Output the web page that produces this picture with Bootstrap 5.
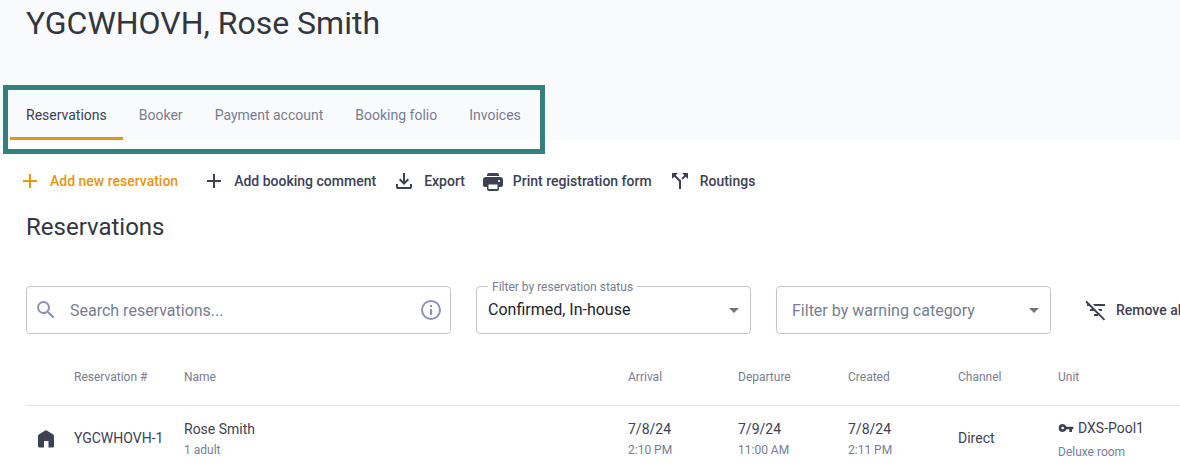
<!DOCTYPE html>
<html lang="en">
<head>
<meta charset="utf-8">
<meta name="viewport" content="width=device-width, initial-scale=1">
<title>YGCWHOVH, Rose Smith</title>
<link rel="stylesheet" href="https://cdn.jsdelivr.net/npm/bootstrap@5.3.0/dist/css/bootstrap.min.css">
<style>
  :root { --ink: #3e4154; --soft: #787d91; --accent: #e39612; --field: #c1c4d6; }
  body { font-family: Roboto, "Liberation Sans", sans-serif; font-size: 14px; line-height: 20px; color: var(--ink); background: #fff; overflow-x: hidden; }
  svg { fill: currentColor; flex: none; }
  .page-head { display: flow-root; background: #f9fafc; }
  .page-head h1 { font-size: 32px; line-height: 40px; font-weight: 400; color: #33363f; padding: 3px 26px 42px; }
  .tab-frame { width: fit-content; border: 5px solid #377e7f; margin: 0 3px -14px; padding: 0 3px 9px 2px; position: relative; }
  .tab-frame .nav-link { color: var(--soft); padding: 15px 16px 12px; border-bottom: 3px solid transparent; }
  .tab-frame .nav-link.active { color: var(--ink); border-color: var(--accent); }
  .page-body { padding: 29px 0 0 26px; }
  .actions { margin-left: -8px; gap: 16px; }
  .act { font-size: 14px; line-height: 24px; font-weight: 500; color: var(--ink); border: 0; padding: 0; display: flex; gap: 8px; white-space: nowrap; }
  .act-main { color: var(--accent); margin-right: 8px; }
  .page-body h2 { font-size: 24px; line-height: 32px; font-weight: 400; color: #33363f; margin: 18px 0 43px; }
  .filters { gap: 25px; }
  .field { height: 48px; border: 1px solid var(--field); border-radius: 4px; font-size: 16px; line-height: 24px; }
  .field input, .field select { border: 0; outline: 0; background: none; appearance: none; color: #22242c; width: 100%; height: 100%; padding: 0; min-width: 0; }
  .field input::placeholder { color: var(--soft); opacity: 1; }
  .search { flex: 1 1 0; min-width: 200px; color: #8e94b0; padding: 0 7px; gap: 12px; }
  .pick { flex: 0 1 275px; min-width: 0; }
  .pick select { padding: 0 32px 0 11px; }
  .pick select.empty { color: var(--soft); padding: 2px 32px 0 15px; }
  .pick label { position: absolute; left: 11px; top: -8px; font-size: 12px; line-height: 16px; background: #fff; color: var(--soft); padding: 0 4px; }
  .pick svg { position: absolute; right: 4px; top: 11px; color: #757575; pointer-events: none; }
  .remove { width: 96px; margin-left: 8px; gap: 8px; }
  .grid-table { table-layout: fixed; width: 100%; margin-top: 16px; }
  .grid-table th { font-size: 12px; line-height: 16px; font-weight: 400; color: var(--soft); height: 55px; padding: 0; border-bottom: 1px solid #e0e0e0; }
  .grid-table td { height: 65px; padding: 0; white-space: nowrap; }
  .sub { font-size: 12px; line-height: 16px; color: var(--soft); display: block; }
  .two, .unit { padding-top: 2px; }
  .two .sub { margin-top: 3px; }
  .unit .sub { margin-top: 6px; }
  .w-icon { width: 48px; } .w-date { width: 110px; } .w-chan { width: 100px; } .w-unit { width: 122px; }
</style>
</head>
<body>
<header class="page-head">
  <h1 class="m-0">YGCWHOVH, Rose Smith</h1>
  <nav class="tab-frame" aria-label="Booking">
    <div class="nav flex-nowrap">
      <a class="nav-link active" href="#" aria-current="page">Reservations</a>
      <a class="nav-link" href="#">Booker</a>
      <a class="nav-link" href="#">Payment account</a>
      <a class="nav-link" href="#">Booking folio</a>
      <a class="nav-link" href="#">Invoices</a>
    </div>
  </nav>
</header>

<main class="page-body">
  <div class="actions d-flex">
    <button type="button" class="btn act act-main"><svg width="24" height="24" viewBox="0 0 24 24"><path d="M19 13h-6v6h-2v-6H5v-2h6V5h2v6h6z"/></svg>Add new reservation</button>
    <button type="button" class="btn act"><svg width="24" height="24" viewBox="0 0 24 24"><path d="M19 13h-6v6h-2v-6H5v-2h6V5h2v6h6z"/></svg>Add booking comment</button>
    <button type="button" class="btn act"><svg width="24" height="24" viewBox="0 0 24 24"><path d="M12 16l-5-5 1.400-1.450 2.600 2.600V4h2v8.150l2.600-2.600L17 11zM6 20q-.825 0-1.413-.587T4 18v-3h2v3h12v-3h2v3q0 .825-.587 1.413T18 20z"/></svg>Export</button>
    <button type="button" class="btn act"><svg width="24" height="24" viewBox="0 0 24 24"><path d="M18 7H6V6q0-2 2-2h8q2 0 2 2zM18 13q.425 0 .713-.287T19 12t-.287-.712T18 11t-.712.288T17 12t.288.713T18 13zM16.500 20v-4.500h-9V20zm-.500 2H8q-2 0-2-2v-2H4q-2 0-2-2v-5q0-3 3-3h14q3 0 3 3v5q0 2-2 2h-2v2q0 2-2 2z"/></svg>Print registration form</button>
    <button type="button" class="btn act"><svg width="24" height="24" viewBox="0 0 24 24"><path d="M14 4l2.290 2.290-2.880 2.880 1.420 1.420 2.880-2.880L20 10V4zM10 4H4v6l2.290-2.290 4.710 4.700V20h2v-8.410l-5.290-5.300z"/></svg>Routings</button>
  </div>

  <h2>Reservations</h2>

  <div class="filters d-flex">
    <div class="field search d-flex align-items-center">
      <svg width="24" height="24" viewBox="0 0 24 24"><path d="M15.500 14h-.790l-.280-.270A6.470 6.470 0 0 0 16 9.500 6.500 6.500 0 1 0 9.500 16c1.610 0 3.090-.590 4.230-1.570l.270.280v.790l5 4.990L20.490 19zm-6 0C7.010 14 5 11.990 5 9.500S7.010 5 9.500 5 14 7.010 14 9.500 11.990 14 9.500 14z"/></svg>
      <input type="text" placeholder="Search reservations..." aria-label="Search reservations">
      <svg width="24" height="24" viewBox="0 0 24 24"><path d="M11 7h2v2h-2zm0 4h2v6h-2zm1-9a10 10 0 1 0 0 20 10 10 0 0 0 0-20zm0 18a8 8 0 1 1 0-16 8 8 0 0 1 0 16z"/></svg>
    </div>
    <div class="field pick position-relative">
      <label for="status">Filter by reservation status</label>
      <select id="status"><option>Confirmed, In-house</option></select>
      <svg width="24" height="24" viewBox="0 0 24 24"><path d="M7 10l5 5 5-5z"/></svg>
    </div>
    <div class="field pick position-relative">
      <select class="empty" aria-label="Filter by warning category"><option>Filter by warning category</option></select>
      <svg width="24" height="24" viewBox="0 0 24 24"><path d="M7 10l5 5 5-5z"/></svg>
    </div>
    <button type="button" class="btn act remove align-items-center"><svg width="24" height="24" viewBox="0 0 24 24"><path d="M10.830 8H21V6H8.830zM15.830 13H18v-2h-4.170zM14 16.830V18h-4v-2h3.170l-3-3H6v-2h2.170l-3-3H3V6h.170L1.390 4.220l1.410-1.410 18.380 18.380-1.410 1.420z"/></svg>Remove al</button>
  </div>

  <table class="grid-table">
    <colgroup><col class="w-icon"><col class="w-date"><col><col class="w-date"><col class="w-date"><col class="w-date"><col class="w-chan"><col class="w-unit"></colgroup>
    <thead>
      <tr><th></th><th>Reservation #</th><th>Name</th><th>Arrival</th><th>Departure</th><th>Created</th><th>Channel</th><th>Unit</th></tr>
    </thead>
    <tbody>
      <tr>
        <td><svg class="d-block ms-2" width="24" height="24" viewBox="0 0 24 24"><path d="M4 20V10q0-1 .8-1.600L11.200 4.400q.8-.5 1.600 0L19.200 8.400q.8.600.8 1.600v10q0 1.500-1.500 1.500H15q-.5 0-.5-.5v-6H10v6q0 .5-.5.5h-4Q4 21.500 4 20z"/></svg></td>
        <td>YGCWHOVH-1</td>
        <td><div class="two">Rose Smith<span class="sub">1 adult</span></div></td>
        <td><div class="two">7/8/24<span class="sub">2:10 PM</span></div></td>
        <td><div class="two">7/9/24<span class="sub">11:00 AM</span></div></td>
        <td><div class="two">7/8/24<span class="sub">2:11 PM</span></div></td>
        <td>Direct</td>
        <td><div class="unit"><div class="d-flex align-items-center gap-1"><svg width="16" height="16" viewBox="0 0 24 24"><path d="M12.650 10A6 6 0 0 0 7 6a6 6 0 1 0 0 12 6 6 0 0 0 5.650-4H17v4h4v-4h2v-4zM7 14a2 2 0 1 1 0-4 2 2 0 0 1 0 4z"/></svg>DXS-Pool1</div><span class="sub">Deluxe room</span></div></td>
      </tr>
    </tbody>
  </table>
</main>
<script src="https://cdn.jsdelivr.net/npm/bootstrap@5.3.0/dist/js/bootstrap.bundle.min.js"></script>
</body>
</html>
